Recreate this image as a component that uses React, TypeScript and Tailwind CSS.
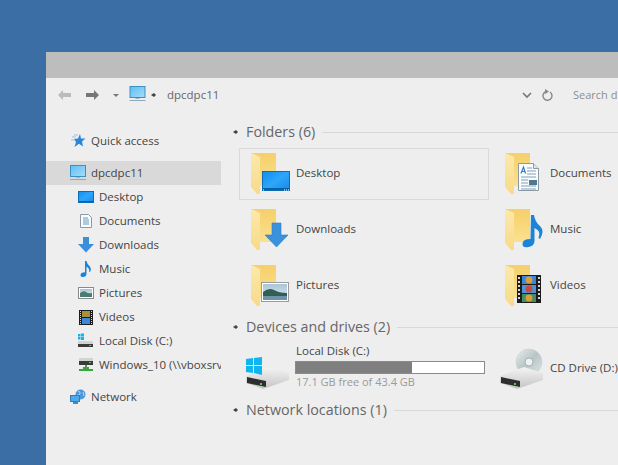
import type { ReactNode } from "react";

const font = { fontFamily: '"Open Sans", "Noto Sans", sans-serif' };

function Defs() {
  return (
    <svg className="absolute size-0">
      <defs>
        <linearGradient id="folderBack" x1="0" y1="0" x2="0" y2="1">
          <stop offset="0" stopColor="#f5d06a" />
          <stop offset="1" stopColor="#fbe08f" />
        </linearGradient>
        <linearGradient id="folderFlap" x1="0" y1="0" x2="0" y2="1">
          <stop offset="0" stopColor="#fce9ab" />
          <stop offset="1" stopColor="#f8da88" />
        </linearGradient>
        <linearGradient id="screen" x1="0" y1="0" x2="1" y2="1">
          <stop offset="0" stopColor="#0f8ff0" />
          <stop offset="0.5" stopColor="#2ea6fb" />
          <stop offset="1" stopColor="#1389e8" />
        </linearGradient>
        <linearGradient id="monitor" x1="0" y1="0" x2="1" y2="1">
          <stop offset="0" stopColor="#5cc0f5" />
          <stop offset="1" stopColor="#a8dcf8" />
        </linearGradient>
        <linearGradient id="sky" x1="0" y1="0" x2="0" y2="1">
          <stop offset="0" stopColor="#a9c4d6" />
          <stop offset="1" stopColor="#e3edf3" />
        </linearGradient>
        <linearGradient id="disc" x1="0" y1="0" x2="1" y2="1">
          <stop offset="0" stopColor="#e9eeee" />
          <stop offset="0.5" stopColor="#b8c4c4" />
          <stop offset="1" stopColor="#dfe6e6" />
        </linearGradient>
        <linearGradient id="drive" x1="0" y1="0" x2="0" y2="1">
          <stop offset="0" stopColor="#f4f4f4" />
          <stop offset="1" stopColor="#c4c4c4" />
        </linearGradient>
      </defs>
    </svg>
  );
}

function Folder() {
  return (
    <>
      <polygon points="1,4 26,4 26,37 10,37 10,9" fill="url(#folderBack)" />
      <polygon points="1,4 10,8 10,45 7,45 1,38" fill="url(#folderFlap)" />
    </>
  );
}

function FolderIcon({ children }: { children: ReactNode }) {
  return (
    <svg width="46" height="48" viewBox="0 0 46 48" className="shrink-0">
      <Folder />
      {children}
    </svg>
  );
}

function ScreenArt() {
  return (
    <>
      <rect x="12.5" y="22.5" width="27" height="19" fill="url(#screen)" stroke="#0c6eb4" />
      <rect x="13" y="39" width="26" height="2" fill="#0c5f9e" />
      <path d="M13 41h1M34 41h1M36 41h1M38 41h1" stroke="#fff" strokeWidth="1" />
    </>
  );
}

function ArrowArt() {
  return <polygon points="22,18 31,18 31,30 38,30 26.5,42 15,30 22,30" fill="#3a92dd" stroke="#2c7cc3" strokeWidth="0.6" />;
}

function PictureArt() {
  return (
    <>
      <rect x="11.5" y="21.5" width="27" height="19" fill="#fff" stroke="#9b9b9b" />
      <rect x="13" y="23" width="24" height="16" fill="url(#sky)" />
      <path d="M13 31q6-5 11-2t13 3v7H13z" fill="#2f5f55" />
      <rect x="13" y="35" width="24" height="4" fill="#6f93a6" />
    </>
  );
}

function DocArt() {
  return (
    <>
      <path d="M14.5 14.5h15l5 5v22h-20z" fill="#fbfcfd" stroke="#8d9aa5" />
      <path d="M29.5 14.5v5h5" fill="#dfe7ec" stroke="#8d9aa5" />
      <path d="M17 24.5l2.5-6.5 2 6.5M18 22.5h3" fill="none" stroke="#2e7fd0" strokeWidth="1.2" />
      <path d="M23 19h5M23 22h9M23 25h9M17 28h15M17 31h7M17 34h7M17 37h15M17 40h15" stroke="#7d9fb8" strokeWidth="1" />
      <rect x="25" y="31" width="8" height="5" fill="#4d7890" />
    </>
  );
}

function NoteArt() {
  return (
    <path
      d="M27 10h3q1 7 6 11 5 5 0 13l-1.500-1q2-6-1-8-2-1.500-3-2v13q0 5-6 6-6 1-6-3 0-5 8-5z"
      fill="#1c83d6"
    />
  );
}

function FilmArt() {
  return (
    <>
      <rect x="13" y="14" width="24" height="28" fill="#1c1c1c" />
      <rect x="18" y="15" width="14" height="8" fill="#3e86d8" />
      <rect x="18" y="24" width="14" height="8" fill="#4f92dc" />
      <rect x="18" y="33" width="14" height="8" fill="#4a8d5e" />
      <circle cx="25" cy="19" r="3.400" fill="#d8a03a" />
      <circle cx="25" cy="28" r="3.400" fill="#c94a3a" />
      <circle cx="25" cy="37" r="3.400" fill="#d8a03a" />
      <path d="M15 16v24M35 16v24" stroke="#d9d9d9" strokeWidth="2" strokeDasharray="2 2" />
    </>
  );
}

function DriveBody({ dy = 0 }: { dy?: number }) {
  return (
    <g transform={`translate(0 ${dy})`}>
      <polygon points="1,20 25,11 44,17 44,24 18,33 1,27" fill="url(#drive)" />
      <polygon points="2,21 21,25 21,31 2,27" fill="#2d2f2f" />
      <rect x="15" y="27" width="2" height="2" fill="#4cc75a" />
    </g>
  );
}

function LocalDiskIcon() {
  return (
    <svg width="46" height="34" viewBox="0 0 46 34" className="mt-[14px] shrink-0">
      <DriveBody />
      <g fill="#10b5ee">
        <polygon points="1,3 8,2 8,9 1,9" />
        <polygon points="9,2 17,1 17,9 9,9" />
        <polygon points="1,10 8,10 8,17 1,16" />
        <polygon points="9,10 17,10 17,19 9,17" />
      </g>
    </svg>
  );
}

function CdDriveIcon() {
  return (
    <svg width="46" height="44" viewBox="0 0 46 44" className="mt-[4px] shrink-0">
      <circle cx="30" cy="16" r="13" fill="url(#disc)" stroke="#c6cccc" strokeWidth="0.5" />
      <circle cx="30" cy="16" r="4" fill="#eef2f2" stroke="#a9b1b1" />
      <DriveBody dy={10} />
    </svg>
  );
}

function Small({ children }: { children: ReactNode }) {
  return (
    <svg width="16" height="16" viewBox="0 0 16 16" className="shrink-0">
      {children}
    </svg>
  );
}

const navIcons: Record<string, ReactNode> = {
  star: (
    <Small>
      <polygon points="10,1 11,5.500 15.500,5.500 12,8.500 13,13.500 9,10.800 4.500,14 6,9 4,6 8,5.500" fill="#2b86d9" />
      <path d="M4 2h4M2 4h4M1 7h3" stroke="#8fc3ee" strokeWidth="1" />
    </Small>
  ),
  computer: (
    <Small>
      <rect x="0.500" y="0.500" width="15" height="11" fill="url(#monitor)" stroke="#3f8fc2" />
      <rect x="6" y="12" width="4" height="1" fill="#9fb4c2" />
      <rect x="0" y="14" width="16" height="1" fill="#8ea9bb" />
    </Small>
  ),
  desktop: (
    <Small>
      <rect x="0.500" y="2.500" width="15" height="11" fill="url(#screen)" stroke="#0c6eb4" />
      <rect x="1" y="12" width="14" height="1" fill="#0c5f9e" />
    </Small>
  ),
  documents: (
    <Small>
      <path d="M2.500 1.500h8l3 3v10h-11z" fill="#fbfcfd" stroke="#8d9aa5" />
      <path d="M5 5h5M5 7h6M5 9h6M5 11h6" stroke="#5f9bc4" />
    </Small>
  ),
  downloads: (
    <Small>
      <polygon points="5,0 11,0 11,7 16,7 8,15.500 0,7 5,7" fill="#3a8fdc" />
    </Small>
  ),
  music: (
    <Small>
      <path d="M7 0h1.500q.5 3 3 5 2.500 3 .5 6l-1-.5q1-3-2.500-5v7q0 3-3 3.500-3 .5-3-2 0-2.500 4.500-2.800z" fill="#1c83d6" />
    </Small>
  ),
  pictures: (
    <Small>
      <rect x="0.500" y="2.500" width="15" height="11" fill="#fff" stroke="#8a8a8a" />
      <rect x="2" y="4" width="12" height="8" fill="url(#sky)" />
      <path d="M2 8q4-3 6-1t6 1v4H2z" fill="#4a7a70" />
    </Small>
  ),
  videos: (
    <Small>
      <rect x="1" y="1" width="14" height="15" fill="#1c1c1c" />
      <rect x="4" y="2" width="8" height="6" fill="#a88f3e" />
      <rect x="4" y="9" width="8" height="6" fill="#3e86d8" />
      <path d="M2.500 2v13M13.500 2v13" stroke="#d9d9d9" strokeWidth="1" strokeDasharray="1 1" />
    </Small>
  ),
  disk: (
    <Small>
      <g fill="#12b4ef">
        <rect x="0" y="1" width="2.500" height="2.500" />
        <rect x="3" y="0.500" width="3" height="3" />
        <rect x="0" y="4" width="2.500" height="2.500" />
        <rect x="3" y="4" width="3" height="3" />
      </g>
      <rect x="0" y="8" width="15" height="3" fill="#d3d3d3" />
      <rect x="0" y="11" width="15" height="3" fill="#3a3c3c" />
      <rect x="11" y="12" width="2" height="1" fill="#4cc75a" />
    </Small>
  ),
  share: (
    <Small>
      <rect x="1" y="1" width="14" height="3" fill="#d3d3d3" />
      <rect x="1" y="4" width="14" height="4" fill="#3a3c3c" />
      <rect x="11" y="5" width="2" height="1" fill="#4cc75a" />
      <path d="M8 8v4M1 13h14" stroke="#3aa23f" strokeWidth="2" />
      <rect x="5" y="10" width="6" height="3" fill="#3aa23f" />
    </Small>
  ),
  network: (
    <Small>
      <circle cx="10.500" cy="5.500" r="5" fill="#4e97d8" />
      <path d="M8 2q3 1 2 3t-3 1M13 3l1 4" stroke="#b9dcf5" strokeWidth="1" fill="none" />
      <rect x="0.500" y="6.500" width="9" height="6" fill="#4ea8ea" stroke="#2d7fbe" />
      <rect x="3" y="13" width="5" height="2" fill="#3f8fc2" />
    </Small>
  ),
};

function NavRow({ icon, label, indent, active }: { icon: string; label: string; indent?: boolean; active?: boolean }) {
  return (
    <div
      className={`flex h-6 items-center gap-[5px] whitespace-nowrap text-[11.5px] text-[#444444] ${indent ? "pl-8" : "pl-6"} ${active ? "bg-[#d9d9d9]" : ""}`}
    >
      {navIcons[icon]}
      <span>{label}</span>
    </div>
  );
}

function Heading({ label }: { label: string }) {
  return (
    <div className="flex h-5 items-center pl-3 text-[14.3px] text-[#666666]">
      <svg width="5" height="6" viewBox="0 0 5 6" className="shrink-0">
        <polygon points="0,3 3,1 5,3 3,5" fill="#444444" />
      </svg>
      <span className="ml-2 whitespace-nowrap">{label}</span>
      <div className="ml-[7px] h-px flex-1 bg-[#d8d8d8]" />
    </div>
  );
}

function Tile({ label, selected, children }: { label: string; selected?: boolean; children: ReactNode }) {
  return (
    <div
      className={`flex h-[52px] items-start border pl-[10px] text-[11.5px] text-[#444444] ${selected ? "border-[#dadada]" : "border-transparent"}`}
    >
      <FolderIcon>{children}</FolderIcon>
      <span className="mt-[15px] whitespace-nowrap">{label}</span>
    </div>
  );
}

export default function App() {
  return (
    <div className="h-[465px] w-[618px] overflow-hidden bg-[#3b6ea5] pl-[46px] pt-[52px]" style={font}>
      <Defs />
      <div className="flex h-[413px] w-[572px] flex-col overflow-hidden bg-[#eeeeee]">
        <div className="h-[26px] shrink-0 bg-[#bdbdbd]" />

        <div className="flex h-[34px] shrink-0 items-center pl-3">
          <svg width="13" height="10" viewBox="0 0 13 10" className="shrink-0">
            <polygon points="0,5 5,0 5,3 13,3 13,7 5,7 5,10" fill="#bbbbbb" />
          </svg>
          <svg width="13" height="10" viewBox="0 0 13 10" className="ml-[15px] shrink-0">
            <polygon points="13,5 8,0 8,3 0,3 0,7 8,7 8,10" fill="#777777" />
          </svg>
          <svg width="6" height="3" viewBox="0 0 6 3" className="ml-[14px] shrink-0">
            <polygon points="0,0 6,0 3,3" fill="#777777" />
          </svg>
          <svg width="17" height="16" viewBox="0 0 16 16" className="ml-[10px] shrink-0 -translate-y-px">
            <rect x="0.500" y="0.500" width="15" height="11" fill="url(#monitor)" stroke="#3f8fc2" />
            <rect x="6" y="12" width="4" height="1" fill="#9fb4c2" />
            <rect x="0" y="14" width="16" height="1" fill="#8ea9bb" />
          </svg>
          <svg width="5" height="6" viewBox="0 0 5 6" className="ml-[5px] shrink-0">
            <polygon points="0,3 3,1 5,3 3,5" fill="#444444" />
          </svg>
          <span className="ml-[11px] w-[51px] shrink-0 whitespace-nowrap text-[11.5px] text-[#666666]">dpcdpc11</span>
          <svg width="10" height="7" viewBox="0 0 10 7" className="ml-[304px] shrink-0">
            <path d="M1 1l4 4 4-4" fill="none" stroke="#777777" strokeWidth="1.600" />
          </svg>
          <svg width="12" height="13" viewBox="0 0 12 13" className="ml-[10px] shrink-0">
            <path d="M4 2.500a4.500 4.500 0 1 0 4 .5" fill="none" stroke="#888888" strokeWidth="1.400" />
            <polygon points="3,0 7,2.500 3,5" fill="#888888" />
          </svg>
          <span className="ml-[19px] shrink-0 whitespace-nowrap text-[11px] text-[#8f8f8f]">Search dpcdpc11</span>
        </div>

        <div className="flex min-h-0 flex-1">
          <div className="w-[175px] shrink-0 overflow-hidden pt-[17px]">
            <NavRow icon="star" label="Quick access" />
            <div className="mt-2">
              <NavRow icon="computer" label="dpcdpc11" active />
              <NavRow icon="desktop" label="Desktop" indent />
              <NavRow icon="documents" label="Documents" indent />
              <NavRow icon="downloads" label="Downloads" indent />
              <NavRow icon="music" label="Music" indent />
              <NavRow icon="pictures" label="Pictures" indent />
              <NavRow icon="videos" label="Videos" indent />
              <NavRow icon="disk" label="Local Disk (C:)" indent />
              <NavRow icon="share" label="Windows_10 (\\vboxsrv" indent />
            </div>
            <div className="mt-2">
              <NavRow icon="network" label="Network" />
            </div>
          </div>

          <div className="min-w-0 flex-1 pt-[10px]">
            <Heading label="Folders (6)" />
            <div className="mt-[6px] grid grid-cols-[250px_250px] gap-x-1 gap-y-1 pl-[18px]">
              <Tile label="Desktop" selected>
                <ScreenArt />
              </Tile>
              <Tile label="Documents">
                <DocArt />
              </Tile>
              <Tile label="Downloads">
                <ArrowArt />
              </Tile>
              <Tile label="Music">
                <NoteArt />
              </Tile>
              <Tile label="Pictures">
                <PictureArt />
              </Tile>
              <Tile label="Videos">
                <FilmArt />
              </Tile>
            </div>

            <div className="mt-[5px]">
              <Heading label="Devices and drives (2)" />
            </div>
            <div className="mt-[5px] grid h-[50px] grid-cols-[250px_250px] gap-x-1 pl-[18px] text-[11.5px] text-[#444444]">
              <div className="flex items-start pl-[6px]">
                <LocalDiskIcon />
                <div className="ml-1 w-[190px] pt-px">
                  <div className="pl-px leading-4">Local Disk (C:)</div>
                  <div className="mt-[2px] h-[13px] border border-[#8a8a8a] bg-white">
                    <div className="h-full w-[116px] bg-[#7f7f7f]" />
                  </div>
                  <div className="pl-px text-[11px] leading-4 text-[#9a9a9a]">17.1 GB free of 43.4 GB</div>
                </div>
              </div>
              <div className="flex items-start pl-[6px]">
                <CdDriveIcon />
                <span className="ml-[5px] mt-[17px] whitespace-nowrap">CD Drive (D:)</span>
              </div>
            </div>

            <div className="mt-2">
              <Heading label="Network locations (1)" />
            </div>
          </div>
        </div>
      </div>
    </div>
  );
}
